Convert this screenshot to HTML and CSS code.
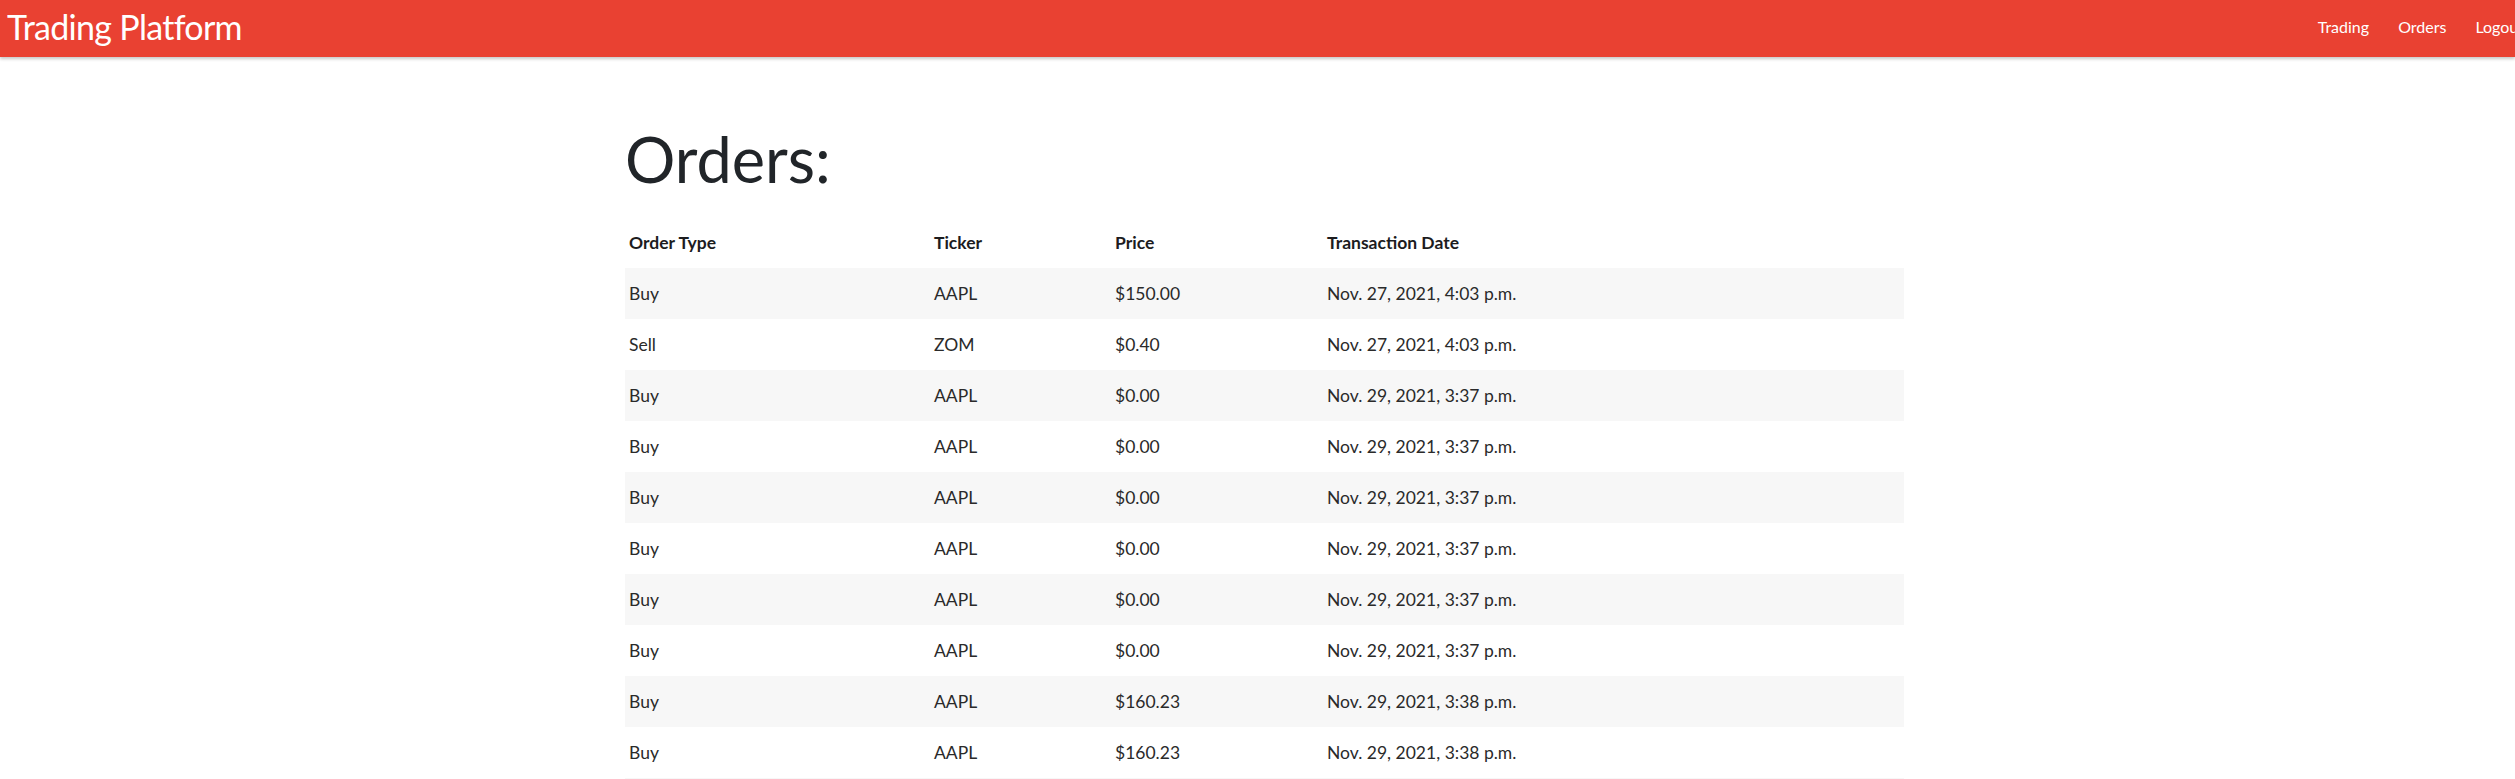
FILE: index.html
```html
<!DOCTYPE html>
<html lang="en">
<head>
<meta charset="utf-8">
<title>Orders - Trading Platform</title>
<link rel="stylesheet" href="styles.css">
</head>
<body>
<nav class="navbar">
  <a class="brand" href="#">Trading Platform</a>
  <ul class="nav-links">
    <li><a href="#">Trading</a></li>
    <li><a href="#">Orders</a></li>
    <li><a href="#">Logout</a></li>
  </ul>
</nav>
<main class="main">
  <div class="container">
    <h1 class="page-title">Orders:</h1>
    <table class="orders">
      <thead>
        <tr>
          <th class="col-type">Order Type</th>
          <th class="col-ticker">Ticker</th>
          <th class="col-price">Price</th>
          <th class="col-date">Transaction Date</th>
        </tr>
      </thead>
      <tbody>
        <tr><td>Buy</td><td>AAPL</td><td>$150.00</td><td>Nov. 27, 2021, 4:03 p.m.</td></tr>
        <tr><td>Sell</td><td>ZOM</td><td>$0.40</td><td>Nov. 27, 2021, 4:03 p.m.</td></tr>
        <tr><td>Buy</td><td>AAPL</td><td>$0.00</td><td>Nov. 29, 2021, 3:37 p.m.</td></tr>
        <tr><td>Buy</td><td>AAPL</td><td>$0.00</td><td>Nov. 29, 2021, 3:37 p.m.</td></tr>
        <tr><td>Buy</td><td>AAPL</td><td>$0.00</td><td>Nov. 29, 2021, 3:37 p.m.</td></tr>
        <tr><td>Buy</td><td>AAPL</td><td>$0.00</td><td>Nov. 29, 2021, 3:37 p.m.</td></tr>
        <tr><td>Buy</td><td>AAPL</td><td>$0.00</td><td>Nov. 29, 2021, 3:37 p.m.</td></tr>
        <tr><td>Buy</td><td>AAPL</td><td>$0.00</td><td>Nov. 29, 2021, 3:37 p.m.</td></tr>
        <tr><td>Buy</td><td>AAPL</td><td>$160.23</td><td>Nov. 29, 2021, 3:38 p.m.</td></tr>
        <tr><td>Buy</td><td>AAPL</td><td>$160.23</td><td>Nov. 29, 2021, 3:38 p.m.</td></tr>
        <tr><td>Buy</td><td>AAPL</td><td>$160.23</td><td>Nov. 29, 2021, 3:38 p.m.</td></tr>
      </tbody>
    </table>
  </div>
</main>
</body>
</html>
```
FILE: styles.css
```css
html {
  overflow-x: hidden;
}
body {
  margin: 0;
  font-family: Lato, "Open Sans", sans-serif;
  color: #212529;
  background: #fff;
}
.navbar {
  height: 57px;
  box-sizing: border-box;
  padding: 0 0 4px 0;
  display: flex;
  align-items: center;
  justify-content: space-between;
  background: #e94132;
  box-shadow: 0 2px 3px rgba(0, 0, 0, 0.22);
  position: relative;
}
.brand {
  color: #fff;
  text-decoration: none;
  font-size: 34px;
  letter-spacing: -0.7px;
  line-height: 42px;
  padding-left: 7px;
}
.nav-links {
  list-style: none;
  margin: 0 -9px 0 0;
  padding: 0;
  display: flex;
  gap: 29px;
}
.nav-links a {
  color: #fff;
  text-decoration: none;
  font-size: 16px;
  line-height: 24px;
}
.main {
  display: flex;
  justify-content: center;
  padding: 64px 0 0 14px;
}
.container {
  width: 1279px;
}
.page-title {
  margin: 0 0 20px 0;
  font-size: 63px;
  font-weight: 400;
  line-height: 1.2;
}
.orders {
  width: 1279px;
  table-layout: fixed;
  border-collapse: collapse;
  font-size: 17.5px;
  line-height: 27px;
}
.orders th,
.orders td {
  padding: 12px 4px;
  text-align: left;
  vertical-align: top;
}
.orders th {
  font-weight: 700;
  color: #1c1c1e;
}
.orders td {
  color: #2a2a2a;
}
.orders tbody tr:nth-child(odd) {
  background: #f7f7f7;
}
.col-type { width: 297px; }
.col-ticker { width: 173px; }
.col-price { width: 204px; }
.col-date { width: auto; }
```
